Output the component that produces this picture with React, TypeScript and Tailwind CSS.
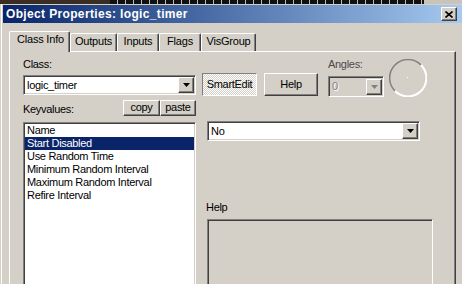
import React from 'react'

const raised = 'border border-t-white border-l-white border-r-[#404040] border-b-[#404040] shadow-[inset_-1px_-1px_#808080] bg-[#d4d0c8]'
const sunken = 'border border-t-[#808080] border-l-[#808080] border-r-white border-b-white shadow-[inset_1px_1px_#404040,inset_-1px_-1px_#d4d0c8]'

const Arrow = ({ disabled }: { disabled?: boolean }) => (
    <div className={`${raised} w-[16px] h-[16px] flex items-center justify-center`}>
        <svg width="7" height="4" viewBox="0 0 7 4">
            <polygon points="0,0 7,0 3.5,4" fill={disabled ? '#808080' : '#000'} />
        </svg>
    </div>
)

const Combo = ({ value, className, disabled }: { value: string; className: string; disabled?: boolean }) => (
    <div className={`${sunken} ${disabled ? 'bg-[#d4d0c8]' : 'bg-white'} ${className} flex items-center p-[1px]`}>
        <span className={`flex-1 pl-[2px] leading-[13px] ${disabled ? 'text-[#808080] [text-shadow:1px_1px_#fff]' : ''}`}>{value}</span>
        <Arrow disabled={disabled} />
    </div>
)

const tabs = ['Outputs', 'Inputs', 'Flags', 'VisGroup']
const tabWidths = ['w-[47px]', 'w-[42px]', 'w-[42px]', 'w-[55px]']
const keys = ['Name', 'Start Disabled', 'Use Random Time', 'Minimum Random Interval', 'Maximum Random Interval', 'Refire Interval']

export default function App() {
    return (
        <div className="w-[462px] h-[284px] overflow-hidden bg-[#d4d0c8] font-['Liberation_Sans',Arial,sans-serif] text-[11px] tracking-[-0.3px] text-black">
            {/* strip of the window behind */}
            <div className="flex h-[4px]">
                <div className="w-[110px] bg-[#3a2e22]" />
                <div className="flex-1 bg-[repeating-linear-gradient(90deg,#111_0,#111_7px,#bbb_7px,#bbb_8px)]" />
                <div className="w-[38px] bg-[#c8c4bc]" />
            </div>

            <div className="pl-[1px]">
                <div className="border-l border-white pl-[1px] pt-[1px]">
                    {/* title bar */}
                    <div className="h-[18px] flex items-center bg-gradient-to-r from-[#0a246a] to-[#a6caf0] pl-[3px] pr-[5px]">
                        <span className="flex-1 text-white font-bold text-[12px] leading-[18px] tracking-[0.35px]">Object Properties: logic_timer</span>
                        <div className={`${raised} w-[16px] h-[14px] flex items-center justify-center`}>
                            <svg width="8" height="7" viewBox="0 0 8 7">
                                <path d="M0.5 0.5L7.5 6.5M7.5 0.5L0.5 6.5" stroke="#000" strokeWidth="1.6" />
                            </svg>
                        </div>
                    </div>

                    <div className="pt-[8px] pl-[6px]">
                        {/* tabs */}
                        <div className="flex h-[20px] tracking-[-0.2px]">
                            <div className="relative z-10 w-[61px] h-[21px] bg-[#d4d0c8] border-t border-l border-white border-r border-r-[#404040] shadow-[inset_-1px_0_#808080] rounded-t-[2px] pt-[1px] pl-[7px] leading-[13px]">
                                Class Info
                            </div>
                            {tabs.map((t, i) => (
                                <div
                                    key={t}
                                    className={`${tabWidths[i]} h-[18px] self-end border-t border-l border-white border-r border-r-[#404040] shadow-[inset_-1px_0_#808080] rounded-t-[2px] pt-[1px] text-center leading-[13px]`}
                                >
                                    {t}
                                </div>
                            ))}
                        </div>

                        {/* tab panel */}
                        <div className="w-[447px] h-[240px] border-t border-l border-white border-r border-r-[#404040] shadow-[inset_-1px_0_#808080] flex gap-[6px] pl-[13px] pt-[6px]">
                            {/* left column */}
                            <div className="w-[173px] flex flex-col">
                                <div className="h-[13px] leading-[13px]">Class:</div>
                                <Combo value="logic_timer" className="mt-[4px] h-[20px]" />
                                <div className="mt-[5px] flex h-[16px]">
                                    <div className="flex-1 pt-[3px] leading-[13px]">Keyvalues:</div>
                                    <div className={`${raised} w-[37px] h-[16px] leading-[13px] text-center`}>copy</div>
                                    <div className={`${raised} w-[36px] h-[16px] leading-[13px] text-center`}>paste</div>
                                </div>
                                <div className={`${sunken} mt-[6px] flex-1 bg-white p-[1px]`}>
                                    {keys.map((k, i) => (
                                        <div
                                            key={k}
                                            className={`h-[13px] leading-[13px] pl-[2px] ${i === 1 ? 'bg-[#0a246a] text-white' : ''}`}
                                        >
                                            {k}
                                        </div>
                                    ))}
                                </div>
                            </div>

                            {/* right column */}
                            <div className="flex flex-col">
                                <div className="flex items-start">
                                    <div className="mt-[15px] w-[55px] h-[23px] border border-t-[#808080] border-l-[#808080] border-r-white border-b-white bg-[repeating-conic-gradient(#fff_0_25%,#d4d0c8_0_50%)] bg-[length:2px_2px] flex items-center justify-center leading-[13px]">
                                        SmartEdit
                                    </div>
                                    <div className={`${raised} mt-[15px] ml-[7px] w-[54px] h-[23px] flex items-center justify-center leading-[13px]`}>Help</div>
                                    <div className="ml-[10px] flex flex-col">
                                        <div className="h-[13px] leading-[13px] text-[#4a4a4a]">Angles:</div>
                                        <Combo value="0" disabled className="mt-[5px] w-[56px] h-[21px]" />
                                    </div>
                                    <svg className="ml-[5px] mt-[1px]" width="38" height="38" viewBox="0 0 38 38">
                                        <path d="M6 32 A18 18 0 0 1 32 6" fill="none" stroke="#808080" strokeWidth="1.5" />
                                        <path d="M32 6 A18 18 0 0 1 6 32" fill="none" stroke="#fff" strokeWidth="2" />
                                        <rect x="18" y="18" width="1" height="1" fill="#fff" />
                                    </svg>
                                </div>
                                <Combo value="No" className="mt-[24px] ml-[5px] w-[213px] h-[20px]" />
                                <div className="mt-[60px] ml-[4px] h-[13px] leading-[13px]">Help</div>
                                <div className={`${sunken} mt-[5px] ml-[5px] w-[226px] flex-1`} />
                            </div>
                        </div>
                    </div>
                </div>
            </div>
        </div>
    )
}
